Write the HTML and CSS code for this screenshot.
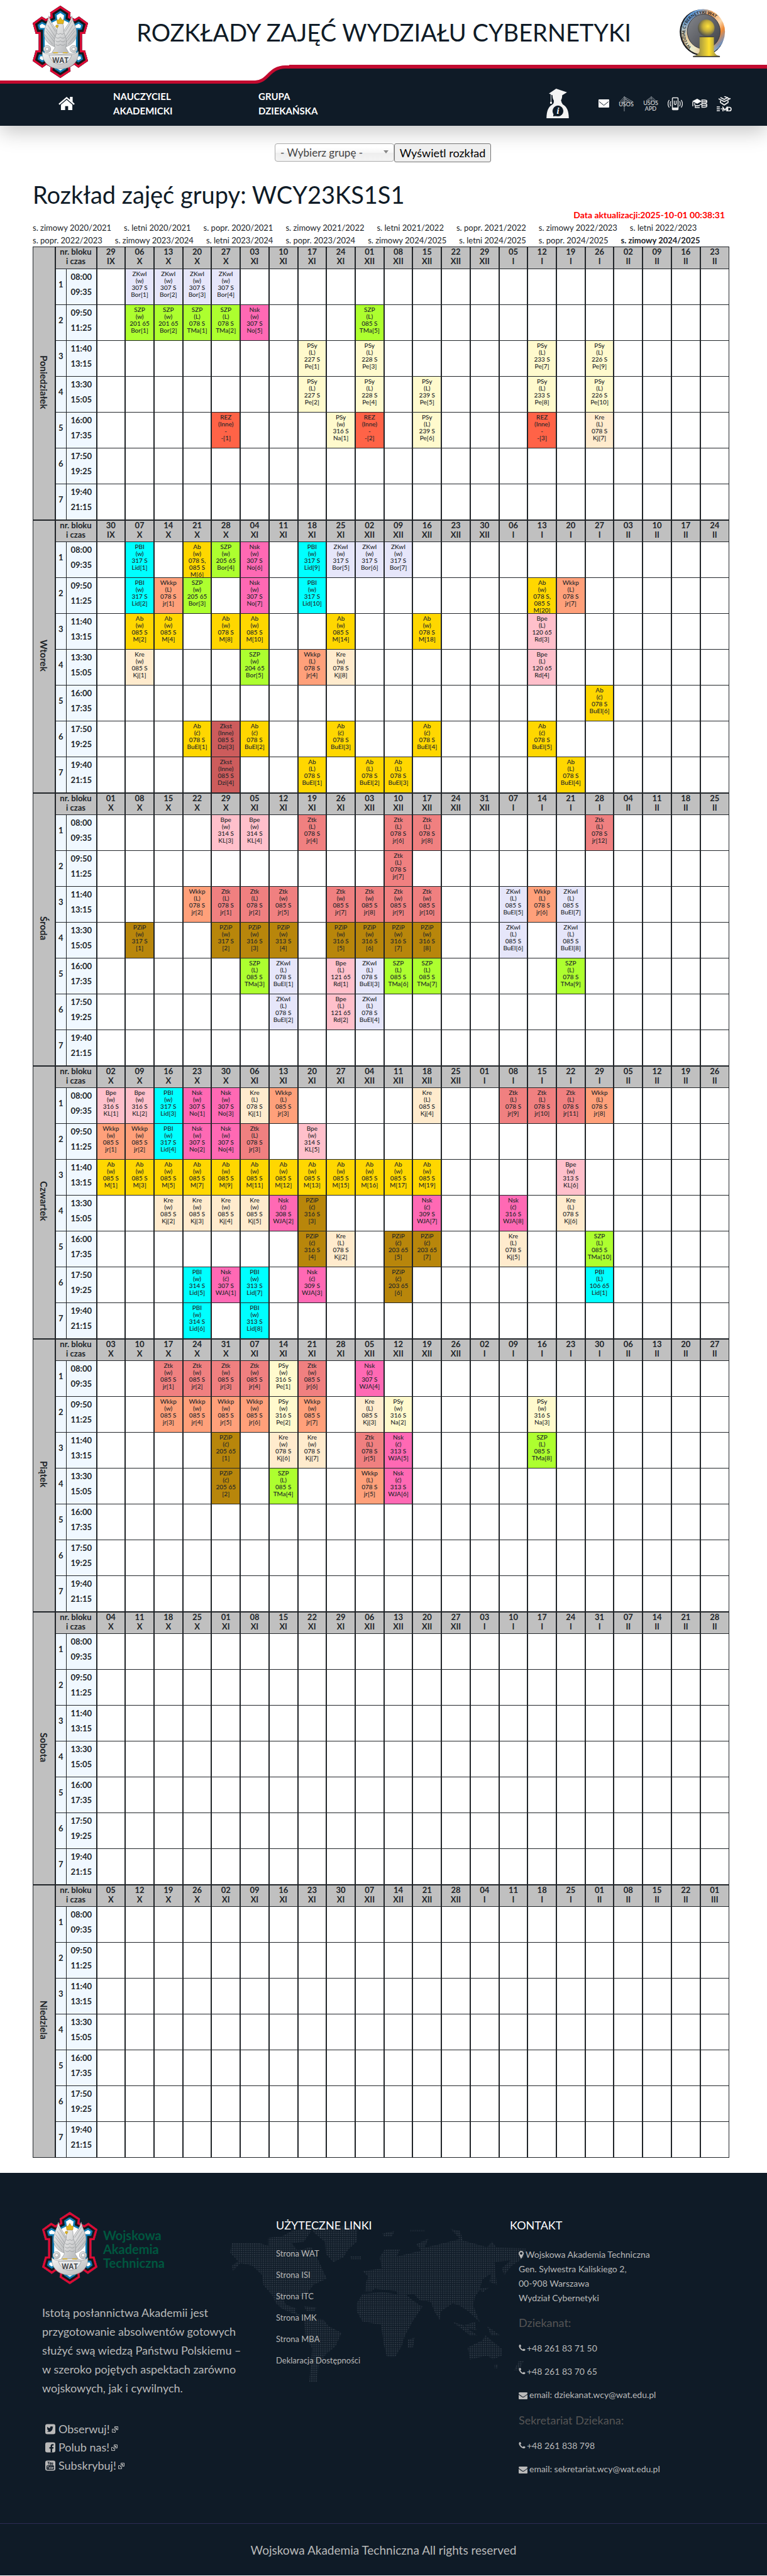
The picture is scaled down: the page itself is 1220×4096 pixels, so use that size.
FILE: index.html
```html
<!DOCTYPE html>
<html lang="pl">
<head>
<meta charset="utf-8">
<meta name="viewport" content="width=device-width, initial-scale=1">
<title>Rozkłady zajęć Wydziału Cybernetyki</title>
<link rel="stylesheet" href="styles.css">
</head>
<body>
<svg class="defs" aria-hidden="true">
  <defs>
    <linearGradient id="silver" x1="0" y1="0" x2="1" y2="1">
      <stop offset="0" stop-color="#f4f4f4"/><stop offset="1" stop-color="#b4b6b8"/>
    </linearGradient>
    <clipPath id="crest-clip"><path d="M46 0 63 11 62 18 70 22 77 18 92 29 87 47 82 47 82 74 87 74 92 92 76 103 69 98 62 102 63 109 46 120 29 109 30 102 23 98 16 103 0 92 5 74 10 74 10 47 5 47 0 29 15 18 22 22 30 18 29 11Z"/></clipPath>
    <symbol id="crest" viewBox="0 0 92 120">
      <g clip-path="url(#crest-clip)" stroke-linejoin="miter">
        <path fill="#fff" stroke="#0d7cb5" stroke-width="20" d="M46 0 63 11 62 18 70 22 77 18 92 29 87 47 82 47 82 74 87 74 92 92 76 103 69 98 62 102 63 109 46 120 29 109 30 102 23 98 16 103 0 92 5 74 10 74 10 47 5 47 0 29 15 18 22 22 30 18 29 11Z"/>
        <path fill="none" stroke="#15181c" stroke-width="14" d="M46 0 63 11 62 18 70 22 77 18 92 29 87 47 82 47 82 74 87 74 92 92 76 103 69 98 62 102 63 109 46 120 29 109 30 102 23 98 16 103 0 92 5 74 10 74 10 47 5 47 0 29 15 18 22 22 30 18 29 11Z"/>
        <path fill="none" stroke="#dc0a34" stroke-width="7" d="M46 0 63 11 62 18 70 22 77 18 92 29 87 47 82 47 82 74 87 74 92 92 76 103 69 98 62 102 63 109 46 120 29 109 30 102 23 98 16 103 0 92 5 74 10 74 10 47 5 47 0 29 15 18 22 22 30 18 29 11Z"/>
      </g>
      <g fill="url(#silver)" stroke="#8b8e92" stroke-width=".7">
        <path d="M27 17C24 30 19 36 19 46c0 11 7 18 17 22l7-20-6-12c-4-5-8-11-10-19z"/>
        <path d="M65 17c3 13 8 19 8 29 0 11-7 18-17 22l-7-20 6-12c4-5 8-11 10-19z"/>
        <path d="M41 32c-1 8 0 12-3 18-3 7-2 15-1 20l-5 8h28l-5-8c1-5 2-13-1-20-3-6-2-10-3-18-2-4-7-5-10 0z"/>
        <path d="M22 42l14 18M20 48l13 16M25 32l12 19M26 24l12 19M70 42 56 60M72 48 59 64M67 32 55 51M66 24 54 43M22 37l14 18M70 37 56 55" fill="none"/>
        <path d="M40 46q3 3 6 0 3 3 6 0M38 52q4 4 8 0 4 4 8 0M38 58q4 4 8 0 4 4 8 0M38 64q4 4 8 0 4 4 8 0" fill="none"/>
        <path d="M16 76c-1 18 12 29 30 29s31-11 30-29c-4 4-10 5-14 3-9 2-23 2-32 0-5 2-10 1-14-3z"/>
        <path d="M27 82c6 20 32 20 38 0z" fill="#e9eaeb"/>
        <circle cx="24" cy="72" r="6"/><circle cx="68" cy="72" r="6"/>
        <circle cx="24" cy="72" r="3" fill="#f5f5f5"/><circle cx="68" cy="72" r="3" fill="#f5f5f5"/>
      </g>
      <path d="M41 30l-1-7 3 1 3-5 3 5 3-1-1 7zM39 32l4 1-2 4-3-2z" fill="#e3b61c" stroke="#91700e" stroke-width=".5"/>
      <path d="M34 78h8M50 78h8" stroke="#d9ae1d" stroke-width="1.6"/>
      <text x="46" y="95" text-anchor="middle" class="crest-text">WAT</text>
    </symbol>
    <symbol id="i-phone" viewBox="0 0 1792 1792"><path d="M1600 1240q0 27-10 70.500t-21 68.500q-21 50-122 106-94 51-186 51-27 0-53-3.500t-57.500-12.500-47-14.500-55.500-20.500-49-18q-98-35-175-83-127-79-264-216t-216-264q-48-77-83-175-3-9-18-49t-20.500-55.500-14.500-47-12.500-57.500-3.500-53q0-92 51-186 56-101 106-122 25-11 68.500-21t70.500-10q14 0 21 3 18 6 53 76 11 19 30 54t35 63.500 31 53.500q3 4 17.500 25t21.500 35.500 7 28.500q0 20-28.500 50t-62 55-62 53-28.500 46q0 9 5 22.500t8.500 20.500 14 24 11.500 19q76 137 174 235t235 174q2 1 19 11.500t24 14 20.500 8.500 22.500 5q18 0 46-28.500t53-62 55-62 50-28.500q14 0 28.500 7t35.500 21.500 25 17.500q25 15 53.500 31t63.500 35 54 30q70 35 76 53 3 7 3 21z"/></symbol>
    <symbol id="i-mail" viewBox="0 128 1792 1536"><path d="M1792 710v794q0 66-47 113t-113 47h-1472q-66 0-113-47t-47-113v-794q44 49 101 87 362 246 497 345 57 42 92.500 65.500t94.500 48 110 24.500h2q51 0 110-24.500t94.500-48 92.500-65.500q170-123 498-345 57-39 100-87zm0-294q0 79-49 151t-122 123q-376 261-468 325-10 7-42.500 31t-54 38.500-52 32.500-57.500 27-50 9h-2q-23 0-50-9t-57.500-27-52-32.500-54-38.500-42.500-31q-91-64-262-182.500t-205-142.500q-62-42-117-115.500t-55-136.500q0-78 41.500-130t118.500-52h1472q65 0 112.500 47t47.500 113z"/></symbol>
    <symbol id="i-pin" viewBox="384 128 1024 1536"><path d="M1152 640q0-106-75-181t-181-75-181 75-75 181 75 181 181 75 181-75 75-181zm256 0q0 109-33 179l-364 774q-16 33-47.500 52t-67.500 19-67.500-19-46.500-52l-365-774q-33-70-33-179 0-212 150-362t362-150 362 150 150 362z"/></symbol>
    <symbol id="i-ext" viewBox="0 0 10 10"><path d="M3.500 4.500h-3v5h5v-3M4.500 3.500v-3h5v5h-3" fill="none" stroke="currentColor"/><path d="M2.500 7.500 7 3M4 2.500h3.500V6M3 4.500 5.500 7" fill="none" stroke="currentColor"/></symbol>
  </defs>
</svg>

<header class="site-header">
  <div class="masthead">
    <a href="#" class="crest-link" aria-label="Wojskowa Akademia Techniczna"><svg class="crest"><use href="#crest"/></svg></a>
    <p class="site-title">ROZKŁADY ZAJĘĆ WYDZIAŁU CYBERNETYKI</p>
    <svg class="faculty" viewBox="0 0 76 81" role="img" aria-label="Wydział Cybernetyki">
      <defs>
        <linearGradient id="ring" x1="0" y1="0" x2="1" y2="1">
          <stop offset="0" stop-color="#2f7fd6"/><stop offset=".2" stop-color="#6aa0dc"/><stop offset=".38" stop-color="#f0a25c"/><stop offset=".58" stop-color="#fbd9ae"/><stop offset=".7" stop-color="#f08a35"/><stop offset=".86" stop-color="#5c93d8"/><stop offset="1" stop-color="#9cc3ea"/>
        </linearGradient>
        <linearGradient id="ring-fade" x1=".1" y1="1" x2=".5" y2=".5">
          <stop offset="0" stop-color="#e5f2d8"/><stop offset="1" stop-color="#e5f2d8" stop-opacity="0"/>
        </linearGradient>
        <linearGradient id="disc" x1="0" y1="0" x2="1" y2="1">
          <stop offset="0" stop-color="#85878c"/><stop offset="1" stop-color="#3c3e45"/>
        </linearGradient>
        <radialGradient id="ball" cx=".6" cy=".4" r=".6">
          <stop offset="0" stop-color="#ffe23a"/><stop offset=".5" stop-color="#c5ad3a"/><stop offset="1" stop-color="#55564f"/>
        </radialGradient>
        <linearGradient id="post"><stop offset="0" stop-color="#6b6950"/><stop offset=".6" stop-color="#ffe02e"/><stop offset="1" stop-color="#77714a"/></linearGradient>
        <path id="ring-path" d="M20 65A31.500 32 0 1 1 64 61"/>
      </defs>
      <ellipse cx="37" cy="40" rx="37" ry="39" fill="#1d1f24" transform="rotate(-20 37 40)"/>
      <ellipse cx="39" cy="38.500" rx="36.500" ry="38" fill="url(#ring)"/>
      <ellipse cx="39" cy="38.500" rx="36.500" ry="38" fill="url(#ring-fade)"/>
      <ellipse cx="40" cy="38" rx="27.500" ry="29" fill="url(#disc)" stroke="#33353b"/>
      <text class="ring-text"><textPath href="#ring-path" startOffset="1">WYDZIAŁ CYBERNETYKI WAT</textPath></text>
      <circle cx="44" cy="32" r="14" fill="url(#ball)"/>
      <path d="M33 47h24v24q2 7 10 8v1H22v-1q9-1 11-8z" fill="url(#post)"/>
      <path d="M33 47h24" stroke="#303030"/><path d="M22 80h45" stroke="#26272b" stroke-width="1.500"/>
    </svg>
  </div>
  <div class="ribbon" aria-hidden="true">
    <svg class="ribbon-curve" viewBox="0 0 460 30">
      <path fill="#0f1b27" d="M0 28H408C428 28 428 4 456 4H460V30H0Z"/>
      <path fill="none" stroke="#c20a2f" stroke-width="5" d="M0 27.500H406C426 27.500 428 3.500 454 3.500H460"/>
    </svg>
    <span class="ribbon-line"></span>
  </div>
  <nav class="nav">
    <a href="#" class="home" aria-label="Strona główna"><svg viewBox="0 0 27 22"><path fill="#fff" d="M13.500 0 0 11.500 1.700 13.300 13.500 3.200 25.300 13.300 27 11.500 23.500 8.500V0H19V4.700ZM13.500 5 4 13V22H11V15.500H16V22H23V13Z"/></svg></a>
    <a href="#" class="nav-item">NAUCZYCIEL<br>AKADEMICKI</a>
    <a href="#" class="nav-item">GRUPA<br>DZIEKAŃSKA</a>
    <div class="tools">
      <a href="#" class="student" aria-label="Informacje dla studenta"><svg viewBox="0 0 37 49"><path fill="#f4f4f4" d="M4 8 16 0 34 6 26 11Q26 17 24 19 25 24 27 26 37 31 37 49H0Q0 31 10 26 13 24 12 19 10 17 10 11L8 10V22H9V25H6V22H7V9Z"/><circle cx="19" cy="37" r="9" fill="#0f1b27"/><path d="M12 41l-1 5 6-1z" fill="#0f1b27"/><text x="19" y="42" text-anchor="middle" class="info-i">i</text></svg></a>
      <a href="#" class="tool tool-mail" aria-label="Poczta"><svg class="mail" viewBox="0 0 17 13"><rect width="17" height="13" rx="1" fill="#fff"/><path d="M1 3.500 8.500 9.500 16 3.500" fill="none" stroke="#0f1b27"/></svg></a>
      <a href="#" class="tool" aria-label="USOS"><svg viewBox="0 0 24 24"><path d="M1 10 9 1 23 9M3 11 9 4 21 10M5 12 9 7 18 11M9 0V24M9 1l4 5M9 4l7 4" fill="none" stroke="#8d949b"/><text x="12" y="16" text-anchor="middle" class="icon-word">USOS</text></svg></a>
      <a href="#" class="tool" aria-label="USOS APD"><svg viewBox="0 0 24 24"><path d="M5 7 13 1 17 4 22 9M7 7l6-4 6 5M13 0V10" fill="none" stroke="#7c848c"/><text x="12" y="14" text-anchor="middle" class="icon-word">USOS</text><text x="12" y="23" text-anchor="middle" class="icon-word">APD</text></svg></a>
      <a href="#" class="tool" aria-label="Mobilny USOS"><svg viewBox="0 0 24 24"><rect x="7.500" y="2.500" width="9" height="19" rx="1" fill="none" stroke="#e8e8e8" stroke-width="1.500"/><path d="M7 18h10v3H7z" fill="#e8e8e8"/><path d="M10.500 7v5q1.500 3 3 0V7M5 8q-2 4 0 8M2.500 6q-4 6 0 12M19 8q2 4 0 8M21.500 6q4 6 0 12" fill="none" stroke="#e8e8e8" stroke-width="1.300"/></svg></a>
      <a href="#" class="tool" aria-label="E-learning"><svg viewBox="0 0 24 24"><path d="M0 8 8 4 15 8 8 12Z" fill="#fff"/><path d="M1 9v7M4 11v3q4 3 8 0M12 15H5v3h7M12 13h3M15.500 6h4q4 0 4 2.500t-4 2.500h-4zM15.500 11.500h4q4 0 4 3t-4 3h-4zM15 8.500h8M15 14.500h8" fill="none" stroke="#e8e8e8" stroke-width="1.500"/></svg></a>
      <a href="#" class="tool" aria-label="E-MD"><svg viewBox="0 0 24 24"><path d="M3 4 12 8.500 22 3.500M6 2l6 3 6-3M12 0l8 4M6 7v3l6 4 6-4V7M8 11l4 3 4-3" fill="none" stroke="#f0f0f0" stroke-width="1.700"/><path d="M0 17h5M0 20h5M0 23h5M6.500 20h2M10 24v-6l3 4 3-4v6M17.500 17.500h2q3.500 0 3.500 3t-3.500 3h-2z" fill="none" stroke="#f0f0f0" stroke-width="1.700"/></svg></a>
    </div>
  </nav>
</header>

<main class="content">
  <form class="picker">
    <div class="select-wrap">
      <select name="grupa" aria-label="Grupa"><option>- Wybierz grupę -</option><option>WCY23KS1S1</option></select>
    </div>
    <button type="button">Wyświetl rozkład</button>
  </form>
  <h1>Rozkład zajęć grupy: WCY23KS1S1</h1>
  <p class="updated">Data aktualizacji:2025-10-01 00:38:31</p>
  <div class="terms">
    <div class="terms-row">
      <a href="#">s. zimowy 2020/2021</a><a href="#">s. letni 2020/2021</a><a href="#">s. popr. 2020/2021</a><a href="#">s. zimowy 2021/2022</a><a href="#">s. letni 2021/2022</a><a href="#">s. popr. 2021/2022</a><a href="#">s. zimowy 2022/2023</a><a href="#">s. letni 2022/2023</a>
    </div>
    <div class="terms-row">
      <a href="#">s. popr. 2022/2023</a><a href="#">s. zimowy 2023/2024</a><a href="#">s. letni 2023/2024</a><a href="#">s. popr. 2023/2024</a><a href="#">s. zimowy 2024/2025</a><a href="#">s. letni 2024/2025</a><a href="#">s. popr. 2024/2025</a><a href="#" class="current">s. zimowy 2024/2025</a>
    </div>
  </div>
  <table class="plan" id="plan">
    <colgroup><col class="c-day"><col class="c-nr"><col class="c-time"><col span="22"></colgroup>
  </table>
</main>

<footer class="footer">
  <svg class="map" viewBox="474 280 606 585" preserveAspectRatio="none" aria-hidden="true">
    <defs><pattern id="dots" width="4.500" height="8" patternUnits="userSpaceOnUse"><rect x="1" y="2" width="2.600" height="4.600" fill="#2f3a46"/></pattern></defs>
    <path fill="url(#dots)" d="M478 345H535L552 355 552 325 580 320 600 300 632 285 640 300 625 340 600 345 612 372 640 360 650 390 662 440 672 478 645 500 632 530 628 548 606 536 582 548 588 575 610 590 606 600 622 622 608 612 580 590 568 570 560 540 542 500 540 465 520 430 495 420 480 450 478 430 490 412 474 380ZM640 285 735 283 733 340 715 370 706 398 685 416 670 385 668 340 645 305ZM720 395H742V405H722ZM785 310 810 300 805 322H790ZM625 580 650 585 648 598H630ZM625 625 665 630 675 655 702 680 690 730 670 760 655 800 652 864H636L640 780 642 740 628 690ZM745 535 785 528 835 540 860 575 868 582 850 630 832 690 825 730 812 770H795L788 720 783 650 745 638 733 600V570ZM750 525 752 495 756 470 745 450 785 440 780 400 790 370 822 368 815 395 850 380 865 372 855 350 880 328 872 362 900 350 945 330 925 292 945 300 950 335 1000 360 1010 340 1020 362 1080 365 1075 400 1050 430 1035 465 1030 440 1048 410 1015 415 1020 500 1005 490 1008 460 990 480 985 520 975 545 972 580 985 640 962 600 945 580 930 570 905 600 903 632 892 600 885 565 862 558 850 535 818 545 815 525 790 520 770 515 764 525ZM842 295H872V300H842ZM930 640 950 650 980 690 965 690ZM955 650 975 640 978 670 960 665ZM1000 655 1027 690 1008 690ZM960 735 990 708 997 690 1010 710 1030 740V765L1012 780 1000 765 965 780ZM838 705 852 698 848 735H838ZM985 515 1005 510 990 530ZM1065 785 1075 785 1065 820H1055ZM1015 798H1022V812H1015ZM575 350 590 345 590 360Z"/>
  </svg>
  <div class="footer-cols">
    <section>
      <div class="brand"><svg class="crest"><use href="#crest"/></svg><p>Wojskowa<br>Akademia<br>Techniczna</p></div>
      <p class="mission">Istotą posłannictwa Akademii jest<br>przygotowanie absolwentów gotowych<br>służyć swą wiedzą Państwu Polskiemu –<br>w szeroko pojętych aspektach zarówno<br>wojskowych, jak i cywilnych.</p>
      <ul class="social">
        <li><a href="#"><svg class="sq" viewBox="0 0 16 16"><rect width="16" height="16" rx="3"/><path fill="#0f1b27" d="M13 4.600 11.900 5C12 9 9.500 12.300 6 12.300 4.700 12.300 3.600 12 2.700 11.400 3.800 11.400 4.900 11.100 5.600 10.500 4.600 10.400 3.900 9.800 3.700 9H4.600C3.500 8.700 2.900 7.800 2.900 6.900L3.800 7.100C2.900 6.400 2.700 5.200 3.200 4.300 4.300 5.600 5.800 6.300 7.500 6.400 7.200 4.600 8.300 3.500 9.700 3.500 10.300 3.500 10.800 3.700 11.200 4.100L12.500 3.600 11.800 4.700Z"/></svg>Obserwuj!<svg class="ext"><use href="#i-ext"/></svg></a></li>
        <li><a href="#"><svg class="sq" viewBox="0 0 16 16"><rect width="16" height="16" rx="3"/><path fill="#0f1b27" d="M8.500 16V10H6.600V7.600H8.500V5.800C8.500 3.700 9.700 2.700 11.600 2.700L13.300 2.800V5H12.100C11.200 5 11 5.400 11 6.100V7.600H13.200L12.900 10H11V16Z"/></svg>Polub nas!<svg class="ext"><use href="#i-ext"/></svg></a></li>
        <li><a href="#"><svg class="sq" viewBox="0 0 16 16"><rect width="16" height="16" rx="3"/><rect x="2" y="7.500" width="12" height="7" rx="1.500" fill="#0f1b27"/><path d="M4 1.500 5.200 4 6.400 1.500M5.200 4V6.500M7.400 3.300h1.500v3H7.400zM10.300 3v3.300h1.600V3" fill="none" stroke="#0f1b27"/><path d="M3 9h2.500M4.200 9v4M6.500 10v3h1.200v-3M9 9v4h1.200v-2.500H9M13 11.500h-1.500v1.300H13M11.500 11.500v-1.200H13v1.200" fill="none" stroke="#b9b9b9" stroke-width=".8"/></svg>Subskrybuj!<svg class="ext"><use href="#i-ext"/></svg></a></li>
      </ul>
    </section>
    <section>
      <h2>UŻYTECZNE LINKI</h2>
      <ul class="links">
        <li><a href="#">Strona WAT</a></li><li><a href="#">Strona ISI</a></li><li><a href="#">Strona ITC</a></li><li><a href="#">Strona IMK</a></li><li><a href="#">Strona MBA</a></li><li><a href="#">Deklaracja Dostępności</a></li>
      </ul>
    </section>
    <section>
      <h2>KONTAKT</h2>
      <div class="contact">
        <address><svg class="pin"><use href="#i-pin"/></svg>Wojskowa Akademia Techniczna<br>Gen. Sylwestra Kaliskiego 2,<br>00-908 Warszawa<br>Wydział Cybernetyki</address>
        <h3>Dziekanat:</h3>
        <ul>
          <li><svg class="phone"><use href="#i-phone"/></svg>+48 261 83 71 50</li>
          <li><svg class="phone"><use href="#i-phone"/></svg>+48 261 83 70 65</li>
          <li><svg class="letter"><use href="#i-mail"/></svg><a href="mailto:dziekanat.wcy@wat.edu.pl">email: dziekanat.wcy@wat.edu.pl</a></li>
        </ul>
        <h3>Sekretariat Dziekana:</h3>
        <ul>
          <li><svg class="phone"><use href="#i-phone"/></svg>+48 261 838 798</li>
          <li><svg class="letter"><use href="#i-mail"/></svg><a href="mailto:sekretariat.wcy@wat.edu.pl">email: sekretariat.wcy@wat.edu.pl</a></li>
        </ul>
      </div>
    </section>
  </div>
  <p class="copyright">Wojskowa Akademia Techniczna All rights reserved</p>
</footer>
<script src="script.js"></script>
</body>
</html>
```
FILE: styles.css
```css
* { box-sizing: border-box; }
body { margin: 0; background: #fff; color: #212529; font-family: Lato, "Open Sans", sans-serif; }
a { color: inherit; text-decoration: none; }
ul { list-style: none; margin: 0; padding: 0; }
p, h1, h2, h3 { margin: 0; font-weight: 400; }
svg { display: block; }
.defs { position: absolute; width: 0; height: 0; }

.site-header { box-shadow: 0 10px 30px rgba(0, 0, 0, .22); }
.masthead { display: flex; align-items: flex-start; height: 133px; padding: 9px 66px 0 52px; }
.crest { width: 88px; height: 115px; }
.crest-text { font: 700 12px "Open Sans", sans-serif; fill: #4a4c50; }
.site-title { flex: 1; padding-top: 16px; text-align: center; font-size: 38px; line-height: 52px; color: #0f1b27; white-space: nowrap; }
.faculty { width: 73px; height: 77px; margin-top: 5px; }
.ring-text { font: 700 7px Lato, sans-serif; fill: #1c1c1c; }
.ribbon { display: flex; margin-top: -30px; }
.ribbon-curve { width: 460px; height: 30px; flex: none; }
.ribbon-line { flex: 1; background: #0f1b27; border-top: 6px solid #c20a2f; }
.nav { display: flex; align-items: center; height: 67px; padding: 0 56px 4px 93px; background: #0f1b27; color: #fff; }
.home svg { width: 26px; height: 21px; }
.home { margin-right: 61px; }
.nav-item { width: 231px; font-size: 15px; font-weight: 700; line-height: 23px; }
.tools { display: flex; align-items: center; gap: 15px; margin-left: auto; }
.student { margin-right: 25px; }
.student svg { width: 36px; height: 47px; }
.info-i { font: italic 700 15px "Liberation Serif", serif; fill: #fff; }
.tool { width: 24px; }
.tool svg { width: 24px; height: 24px; }
.tool-mail { display: flex; justify-content: flex-end; }
.tool .mail { width: 17px; height: 13px; }
.icon-word { font: 400 9px Lato, sans-serif; fill: #e8e8e8; }

.content { padding: 28px 60px 0 52px; }
.picker { display: flex; justify-content: center; padding-left: 6px; }
.select-wrap { position: relative; }
.select-wrap::after { content: ""; position: absolute; right: 9px; top: 11px; border: 4px solid transparent; border-top: 5px solid #888; border-bottom: 0; pointer-events: none; }
.picker select { appearance: none; width: 190px; height: 29px; padding: 0 8px; border: 1px solid #aaa; border-radius: 4px; background: linear-gradient(#fff 20%, #f6f6f6 50%, #eee 52%, #f4f4f4 100%); font: 17px Lato, sans-serif; color: #444; }
.picker button { height: 30px; width: 154px; padding: 0; border: 1px solid #767676; border-radius: 3px; background: #efefef; font: 18px Lato, sans-serif; color: #000; white-space: nowrap; }
h1 { margin-top: 28px; font-size: 38px; line-height: 46px; color: #0f1b27; }
.updated { padding-right: 7px; text-align: right; color: #f00; font-size: 14px; font-weight: 700; line-height: 20px; }
.terms-row { display: flex; gap: 20px; font-size: 13px; line-height: 20px; white-space: nowrap; }
.current { font-weight: 700; }

.plan { width: 100%; table-layout: fixed; border-collapse: collapse; }
.c-day { width: 35px; }
.c-nr { width: 18px; }
.c-time { width: 48px; }
.plan th, .plan td { padding: 0; border: 1px solid #212529; border-width: 1px 2px; text-align: center; vertical-align: top; overflow: visible; }
.plan tr > :last-child { border-right-width: 1px; }
.plan .date { background: silver; height: 35px; font-size: 13px; font-weight: 700; line-height: 15px; }
.plan tbody { border-top: 2px solid #212529; }
.plan tbody:first-of-type { border-top-width: 1px; }
.plan .day { background: silver; border-left-width: 1px; vertical-align: middle; }
.day span { display: inline-block; writing-mode: vertical-rl; font-size: 15px; font-weight: 700; line-height: 20px; }
.plan .nr, .plan .time { background: #f0f8ff; height: 57px; font-size: 13px; font-weight: 700; }
.plan .nr { line-height: 48px; border-right-width: 1px; }
.plan .time { line-height: 24px; border-left-width: 1px; }
.slot { height: 54px; padding-top: 2px; font-size: 10px; font-weight: 500; line-height: 11px; white-space: pre-line; }
.zkwi { background: #e6e6fa; }
.szp { background: #adff2f; }
.nsk { background: #ff69b4; }
.psy { background: #fffacd; }
.rez { background: #ff6347; }
.kre { background: #ffebcd; }
.pbi { background: #0ff; }
.ab { background: #ffd700; }
.wkkp { background: #ffa07a; }
.bpe { background: #ffc0cb; }
.zkst { background: #cd5c5c; }
.ztk { background: #f08080; }
.pzip { background: #b8860b; }

.footer { position: relative; margin-top: 24px; background: #0f1b27; color: #b9b9b9; }
.map { position: absolute; left: 30%; top: 84px; width: 471px; height: 249px; }
.footer-cols { position: relative; display: grid; grid-template-columns: repeat(3, 1fr); padding: 62px 37px 68px 67px; }
.brand { display: flex; gap: 9px; height: 115px; }
.brand p { padding-top: 26px; color: #00573f; font-size: 20px; font-weight: 700; line-height: 22px; }
.mission { margin-top: 30px; font-size: 18px; line-height: 30px; white-space: nowrap; }
.social { margin-top: 36px; padding-left: 5px; font-size: 18px; line-height: 29px; }
.social a { display: flex; align-items: center; }
.sq { width: 16px; height: 17px; margin-right: 5px; fill: #b9b9b9; }
.ext { width: 10px; height: 10px; margin-left: 3px; }
.footer h2 { margin-top: 9px; color: #fff; font-size: 18px; line-height: 24px; }
.links { margin-top: 16px; font-size: 13px; line-height: 34px; }
.contact { padding: 23px 0 0 14px; font-size: 14px; }
.contact svg { display: inline-block; fill: #b9b9b9; margin-right: 3px; }
.contact address { font-style: normal; line-height: 23px; }
.contact h3 { margin: 16px 0 10px; color: #555; font-size: 18px; line-height: 24px; }
.contact ul + h3 { margin-top: 10px; }
.contact li { line-height: 37px; }
.contact .pin { width: 8px; height: 12px; vertical-align: -1px; }
.contact .phone { width: 13px; height: 13px; vertical-align: -1px; margin: 0 1px 0 -1px; }
.contact .letter { width: 14px; height: 12px; vertical-align: -2px; }
.copyright { padding: 30px 0 28px; border-top: 1px solid #2c2b55; text-align: center; font-size: 19px; line-height: 24px; }
```
FILE: script.js
```js
const HOURS = ["08:00 09:35", "09:50 11:25", "11:40 13:15", "13:30 15:05", "16:00 17:35", "17:50 19:25", "19:40 21:15"];
const ROMAN = ["I", "II", "III", "IV", "V", "VI", "VII", "VIII", "IX", "X", "XI", "XII"];
const WEEKS = 22;
const START = Date.UTC(2025, 8, 29);

// Each entry: week index, subject, form, room, lecturer, meeting number.
const DAYS = [
  ["Poniedziałek", [
    "1 ZKwI w 307_S Bor 1;2 ZKwI w 307_S Bor 2;3 ZKwI w 307_S Bor 3;4 ZKwI w 307_S Bor 4",
    "1 SZP w 201_65 Bor 1;2 SZP w 201_65 Bor 2;3 SZP L 078_S TMa 1;4 SZP L 078_S TMa 2;5 Nsk w 307_S No 5;9 SZP L 085_S TMa 5",
    "7 PSy L 227_S Pe 1;9 PSy L 228_S Pe 3;15 PSy L 233_S Pe 7;17 PSy L 226_S Pe 9",
    "7 PSy L 227_S Pe 2;9 PSy L 228_S Pe 4;11 PSy L 239_S Pe 5;15 PSy L 233_S Pe 8;17 PSy L 226_S Pe 10",
    "4 REZ Inne - - 1;8 PSy w 316_S Na 1;9 REZ Inne - - 2;11 PSy L 239_S Pe 6;15 REZ Inne - - 3;17 Kre L 078_S Kj 7",
    "", ""]],
  ["Wtorek", [
    "1 PBI w 317_S Lid 1;3 Ab w 078_S,/085_S M 6;4 SZP w 205_65 Bor 4;5 Nsk w 307_S No 6;7 PBI w 317_S Lid 9;8 ZKwI w 317_S Bor 5;9 ZKwI w 317_S Bor 6;10 ZKwI w 317_S Bor 7",
    "1 PBI w 317_S Lid 2;2 Wkkp L 078_S jr 1;3 SZP w 205_65 Bor 3;5 Nsk w 307_S No 7;7 PBI w 317_S Lid 10;15 Ab w 078_S,/085_S M 20;16 Wkkp L 078_S jr 7",
    "1 Ab w 085_S M 2;2 Ab w 085_S M 4;4 Ab w 078_S M 8;5 Ab w 085_S M 10;8 Ab w 085_S M 14;11 Ab w 078_S M 18;15 Bpe L 120_65 Rd 3",
    "1 Kre w 085_S Kj 1;5 SZP w 204_65 Bor 5;7 Wkkp L 078_S jr 4;8 Kre w 078_S Kj 8;15 Bpe L 120_65 Rd 4",
    "17 Ab ć 078_S BuEl 6",
    "3 Ab ć 078_S BuEl 1;4 Zkst Inne 085_S Dzi 3;5 Ab ć 078_S BuEl 2;8 Ab ć 078_S BuEl 3;11 Ab ć 078_S BuEl 4;15 Ab ć 078_S BuEl 5",
    "4 Zkst Inne 085_S Dzi 4;7 Ab L 078_S BuEl 1;9 Ab L 078_S BuEl 2;10 Ab L 078_S BuEl 3;16 Ab L 078_S BuEl 4"]],
  ["Środa", [
    "4 Bpe w 314_S KL 3;5 Bpe w 314_S KL 4;7 Ztk L 078_S jr 4;10 Ztk L 078_S jr 6;11 Ztk L 078_S jr 8;17 Ztk L 078_S jr 12",
    "10 Ztk L 078_S jr 7",
    "3 Wkkp L 078_S jr 2;4 Ztk L 078_S jr 1;5 Ztk L 078_S jr 2;6 Ztk w 085_S jr 5;8 Ztk w 085_S jr 7;9 Ztk w 085_S jr 8;10 Ztk w 085_S jr 9;11 Ztk w 085_S jr 10;14 ZKwI L 085_S BuEl 5;15 Wkkp L 078_S jr 6;16 ZKwI L 085_S BuEl 7",
    "1 PZiP w 317_S * 1;4 PZiP w 317_S * 2;5 PZiP w 316_S * 3;6 PZiP w 313_S * 4;8 PZiP w 316_S * 5;9 PZiP w 316_S * 6;10 PZiP w 316_S * 7;11 PZiP w 316_S * 8;14 ZKwI L 085_S BuEl 6;16 ZKwI L 085_S BuEl 8",
    "5 SZP L 085_S TMa 3;6 ZKwI L 078_S BuEl 1;8 Bpe L 121_65 Rd 1;9 ZKwI L 078_S BuEl 3;10 SZP L 085_S TMa 6;11 SZP L 085_S TMa 7;16 SZP L 078_S TMa 9",
    "6 ZKwI L 078_S BuEl 2;8 Bpe L 121_65 Rd 2;9 ZKwI L 078_S BuEl 4",
    ""]],
  ["Czwartek", [
    "0 Bpe w 316_S KL 1;1 Bpe w 316_S KL 2;2 PBI w 317_S Lid 3;3 Nsk w 307_S No 1;4 Nsk w 307_S No 3;5 Kre L 078_S Kj 1;6 Wkkp L 085_S jr 3;11 Kre L 085_S Kj 4;14 Ztk L 078_S jr 9;15 Ztk L 078_S jr 10;16 Ztk L 078_S jr 11;17 Wkkp L 078_S jr 8",
    "0 Wkkp w 085_S jr 1;1 Wkkp w 085_S jr 2;2 PBI w 317_S Lid 4;3 Nsk w 307_S No 2;4 Nsk w 307_S No 4;5 Ztk L 078_S jr 3;7 Bpe w 314_S KL 5",
    "0 Ab w 085_S M 1;1 Ab w 085_S M 3;2 Ab w 085_S M 5;3 Ab w 085_S M 7;4 Ab w 085_S M 9;5 Ab w 085_S M 11;6 Ab w 085_S M 12;7 Ab w 085_S M 13;8 Ab w 085_S M 15;9 Ab w 085_S M 16;10 Ab w 085_S M 17;11 Ab w 085_S M 19;16 Bpe w 313_S KL 6",
    "2 Kre w 085_S Kj 2;3 Kre w 085_S Kj 3;4 Kre w 085_S Kj 4;5 Kre w 085_S Kj 5;6 Nsk ć 308_S WJA 2;7 PZiP ć 316_S * 3;11 Nsk ć 309_S WJA 7;14 Nsk ć 316_S WJA 8;16 Kre L 078_S Kj 6",
    "7 PZiP ć 316_S * 4;8 Kre L 078_S Kj 2;10 PZiP ć 203_65 * 5;11 PZiP ć 203_65 * 7;14 Kre L 078_S Kj 5;17 SZP L 085_S TMa 10",
    "3 PBI w 314_S Lid 5;4 Nsk ć 307_S WJA 1;5 PBI w 313_S Lid 7;7 Nsk ć 309_S WJA 3;10 PZiP ć 203_65 * 6;17 PBI L 106_65 Lid 1",
    "3 PBI w 314_S Lid 6;5 PBI w 313_S Lid 8"]],
  ["Piątek", [
    "2 Ztk w 085_S jr 1;3 Ztk w 085_S jr 2;4 Ztk w 085_S jr 3;5 Ztk w 085_S jr 4;6 PSy w 316_S Pe 1;7 Ztk w 085_S jr 6;9 Nsk ć 307_S WJA 4",
    "2 Wkkp w 085_S jr 3;3 Wkkp w 085_S jr 4;4 Wkkp w 085_S jr 5;5 Wkkp w 085_S jr 6;6 PSy w 316_S Pe 2;7 Wkkp w 085_S jr 7;9 Kre L 085_S Kj 3;10 PSy w 316_S Na 2;15 PSy w 316_S Na 3",
    "4 PZiP ć 205_65 * 1;6 Kre w 078_S Kj 6;7 Kre w 078_S Kj 7;9 Ztk L 078_S jr 5;10 Nsk ć 313_S WJA 5;15 SZP L 085_S TMa 8",
    "4 PZiP ć 205_65 * 2;6 SZP L 085_S TMa 4;9 Wkkp L 078_S jr 5;10 Nsk ć 313_S WJA 6",
    "", "", ""]],
  ["Sobota", ["", "", "", "", "", "", ""]],
  ["Niedziela", ["", "", "", "", "", "", ""]]
];

function lessonCells(row) {
  const cells = new Array(WEEKS).fill("<td></td>");
  row.split(";").filter(Boolean).forEach((entry) => {
    const [week, subject, form, room, who, n] = entry.split(" ");
    const lines = [subject, `(${form})`, ...room.replace(/_/g, " ").split("/"), `${who === "*" ? "" : who}[${n}]`];
    cells[week] = `<td class="${subject.toLowerCase()}"><div class="slot">${lines.join("\n")}</div></td>`;
  });
  return cells.join("");
}

DAYS.forEach(([name, rows], d) => {
  let html = `<tr><th class="day" rowspan="8" scope="rowgroup"><span>${name}</span></th><th class="date" colspan="2">nr. bloku<br>i czas</th>`;
  for (let w = 0; w < WEEKS; w++) {
    const date = new Date(START + (w * 7 + d) * 86400000);
    html += `<th class="date" scope="col">${String(date.getUTCDate()).padStart(2, "0")}<br>${ROMAN[date.getUTCMonth()]}</th>`;
  }
  html += "</tr>";
  rows.forEach((row, i) => {
    html += `<tr><th class="nr" scope="row">${i + 1}</th><th class="time">${HOURS[i].replace(" ", "<br>")}</th>${lessonCells(row)}</tr>`;
  });
  const body = document.createElement("tbody");
  body.innerHTML = html;
  document.getElementById("plan").append(body);
});
```
